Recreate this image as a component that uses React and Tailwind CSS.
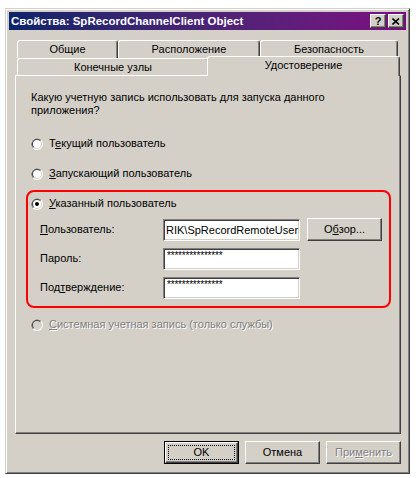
const FONT = { fontFamily: '"Liberation Sans", Arial, sans-serif' };

function Radio({ checked = false, disabled = false }) {
  return (
    <svg width="12" height="12" viewBox="0 0 12 12" className="shrink-0">
      <circle cx="6" cy="6" r="6" fill="#ffffff" />
      <path d="M10.24 1.76 A6 6 0 0 0 1.76 10.24 Z" fill="#808080" />
      <circle cx="6" cy="6" r="5" fill="#d4d0c8" />
      <path d="M9.54 2.46 A5 5 0 0 0 2.46 9.54 Z" fill="#404040" />
      <circle cx="6" cy="6" r="4" fill={disabled ? '#d4d0c8' : '#ffffff'} />
      {checked && <circle cx="6" cy="6" r="2" fill="#000000" />}
    </svg>
  );
}

function RadioRow({ checked, disabled, children }) {
  return (
    <div className="flex items-center h-[13px] gap-[6px]">
      <Radio checked={checked} disabled={disabled} />
      <span
        className={disabled ? 'text-[#808080] [text-shadow:1px_1px_0_#ffffff]' : 'text-black'}
      >
        {children}
      </span>
    </div>
  );
}

function Button({ children, isDefault = false, disabled = false, className = '' }) {
  if (isDefault) {
    return (
      <div className={`border border-black ${className}`}>
        <div className="h-full border border-t-white border-l-white border-r-[#404040] border-b-[#404040] shadow-[inset_-1px_-1px_#808080] p-[2px]">
          <div className="h-full border border-dotted border-black flex items-center justify-center">
            {children}
          </div>
        </div>
      </div>
    );
  }
  return (
    <div
      className={`border border-t-white border-l-white border-r-[#404040] border-b-[#404040] shadow-[inset_-1px_-1px_#808080] flex items-center justify-center ${
        disabled ? 'text-[#808080] [text-shadow:1px_1px_0_#ffffff]' : 'text-black'
      } ${className}`}
    >
      {children}
    </div>
  );
}

function Field({ children, password = false }) {
  return (
    <div className="w-[137px] h-[22px] bg-white border border-t-[#808080] border-l-[#808080] border-r-white border-b-white shadow-[inset_1px_1px_#404040,inset_-1px_-1px_#d4d0c8] overflow-hidden">
      {password ? (
        <div className="pl-[3px] pt-[2px] text-[10px] leading-[10px] tracking-[-0.2px]">***************</div>
      ) : (
        <div className="pl-[2px] pt-[3px] whitespace-nowrap leading-[14px]">{children}</div>
      )}
    </div>
  );
}

function Tab({ children, className = '' }) {
  return (
    <div
      className={`border-t border-l border-t-white border-l-white border-r border-r-[#404040] shadow-[inset_-1px_0_#808080] rounded-t-[3px] bg-[#d4d0c8] flex items-center justify-center ${className}`}
    >
      {children}
    </div>
  );
}

export default function App() {
  return (
    <div className="w-[416px] h-[478px] bg-white pt-[8px] pl-[5px] text-[11px] leading-[13px]" style={FONT}>
      <div className="w-[405px] h-[466px] bg-[#d4d0c8] border border-t-[#d4d0c8] border-l-[#d4d0c8] border-r-[#404040] border-b-[#404040] shadow-[inset_1px_1px_#ffffff,inset_-1px_-1px_#808080] p-[3px] flex flex-col">
        {/* Title bar */}
        <div className="h-[18px] shrink-0 bg-gradient-to-r from-[#0a246a] to-[#7c0a82] flex items-center justify-between pl-[2px] pr-[2px]">
          <span className="text-white font-bold text-[11.5px] whitespace-nowrap">
            Свойства: SpRecordChannelClient Object
          </span>
          <div className="flex gap-[2px]">
            <div className="w-[16px] h-[14px] bg-[#d4d0c8] border border-t-white border-l-white border-r-[#404040] border-b-[#404040] shadow-[inset_-1px_-1px_#808080] flex items-center justify-center font-bold text-[11px] leading-none text-black">
              ?
            </div>
            <div className="w-[16px] h-[14px] bg-[#d4d0c8] border border-t-white border-l-white border-r-[#404040] border-b-[#404040] shadow-[inset_-1px_-1px_#808080] flex items-center justify-center">
              <svg width="8" height="7" viewBox="0 0 8 7">
                <path d="M0.5 0.5 L7 6.5 M7 0.5 L0.5 6.5" stroke="#000" strokeWidth="1.6" />
              </svg>
            </div>
          </div>
        </div>

        {/* Body */}
        <div className="pl-[6px] pt-[10px] flex flex-col">
          {/* Tab row 1 */}
          <div className="flex pl-[2px] h-[18px]">
            <Tab className="w-[101px] h-[18px]">Общие</Tab>
            <Tab className="w-[142px] h-[18px]">Расположение</Tab>
            <Tab className="w-[138px] h-[18px]">Безопасность</Tab>
          </div>
          {/* Tab row 2 */}
          <div className="flex items-end pl-[2px] h-[19px] -mt-[2px] relative z-10">
            <Tab className="w-[192px] h-[17px]">Конечные узлы</Tab>
            <Tab className="w-[193px] h-[20px] -ml-[2px] -mb-[1px] pb-[2px] relative">Удостоверение</Tab>
          </div>

          {/* Panel */}
          <div className="w-[386px] h-[359px] border border-t-white border-l-white border-r-[#404040] border-b-[#404040] shadow-[inset_-1px_-1px_#808080] pt-[15px] pl-[15px] flex flex-col">
            <p>
              Какую учетную запись использовать для запуска данного
              <br />
              приложения?
            </p>
            <div className="mt-[20px]">
              <RadioRow>
                Т<u>е</u>кущий пользователь
              </RadioRow>
            </div>
            <div className="mt-[17px]">
              <RadioRow>
                <u>З</u>апускающий пользователь
              </RadioRow>
            </div>

            <div className="mt-[10px] -ml-[5px] w-[365px] h-[118px] border-2 border-[#ff0000] rounded-[8px] pt-[5px] pl-[3px] flex flex-col">
              <RadioRow checked>
                <u>У</u>казанный пользователь
              </RadioRow>
              <div className="mt-[8px] ml-[9px] flex flex-col gap-[6px]">
                <div className="flex items-center h-[23px]">
                  <span className="w-[123px]">
                    <u>П</u>ользователь:
                  </span>
                  <Field>RIK\SpRecordRemoteUser</Field>
                  <Button className="ml-[7px] w-[75px] h-[23px]">
                    О<u>б</u>зор...
                  </Button>
                </div>
                <div className="flex items-center h-[23px]">
                  <span className="w-[123px]">Пароль:</span>
                  <Field password />
                </div>
                <div className="flex items-center h-[23px]">
                  <span className="w-[123px]">
                    Под<u>т</u>верждение:
                  </span>
                  <Field password />
                </div>
              </div>
            </div>

            <div className="mt-[10px]">
              <RadioRow disabled>
                <u>С</u>истемная учетная запись (только службы)
              </RadioRow>
            </div>
          </div>

          {/* Bottom buttons */}
          <div className="w-[386px] mt-[7px] flex justify-end gap-[6px]">
            <Button isDefault className="w-[75px] h-[23px]">
              OK
            </Button>
            <Button className="w-[75px] h-[23px]">Отмена</Button>
            <Button disabled className="w-[75px] h-[23px]">
              При<u>м</u>енить
            </Button>
          </div>
        </div>
      </div>
    </div>
  );
}
